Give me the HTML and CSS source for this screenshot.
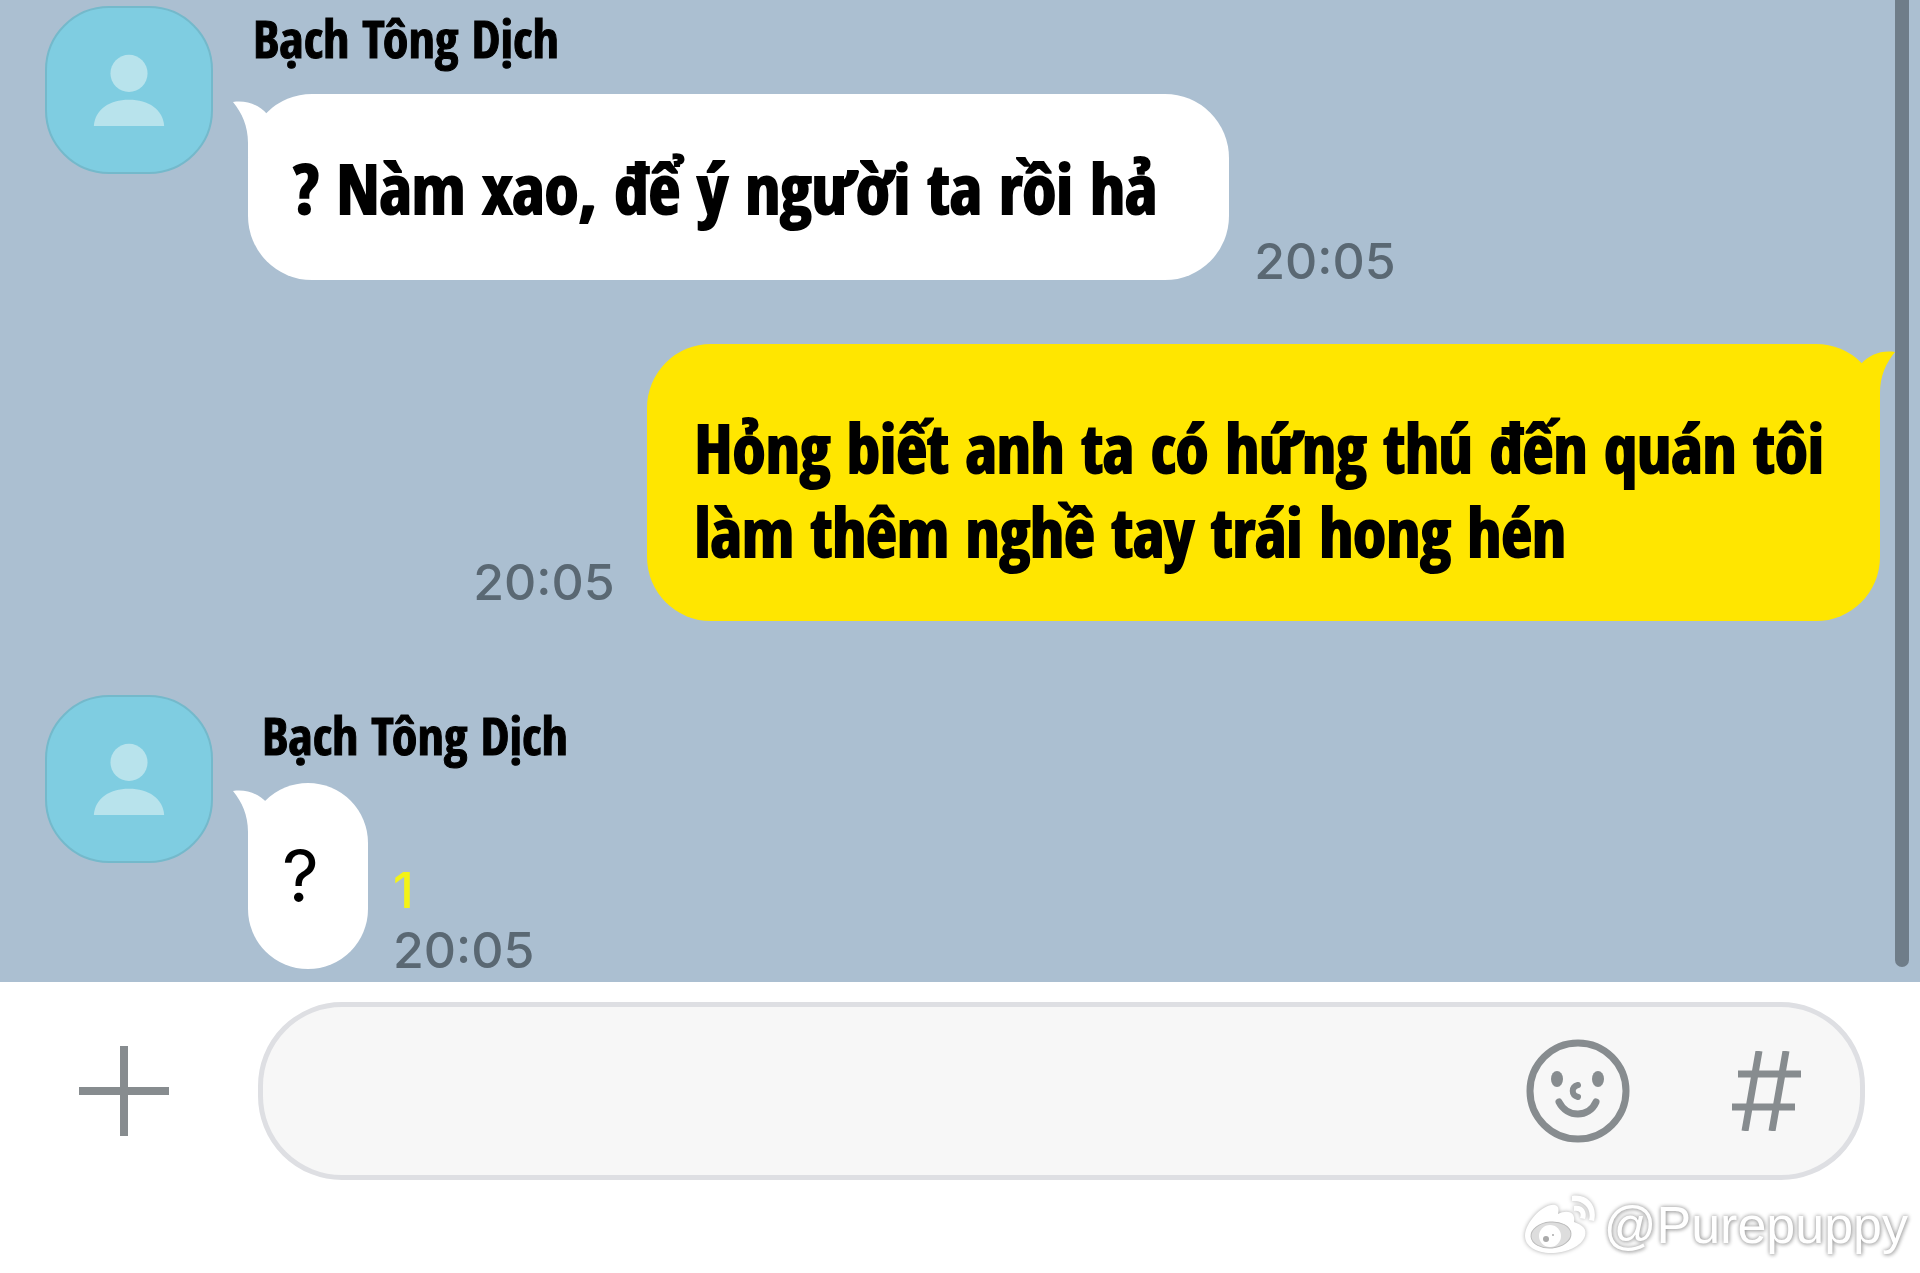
FILE: index.html
```
<!DOCTYPE html>
<html lang="vi">
<head>
<meta charset="utf-8">
<meta name="viewport" content="width=device-width, initial-scale=1">
<title>Bạch Tông Dịch</title>
<link rel="stylesheet" href="styles.css">
</head>
<body>
<svg class="sprite" aria-hidden="true">
  <symbol id="person" viewBox="0 0 168 168">
    <circle cx="84" cy="67" r="19"/>
    <path d="M48 121C49 104 64 94 84 94S119 104 120 121Z"/>
  </symbol>
  <symbol id="tail" viewBox="0 0 48 56">
    <path d="M0 1C14 -1 26 4 34 13L48 28V56H15V42C15 25 9 12 0 1Z"/>
  </symbol>
</svg>
<main class="chat">
  <article class="message">
    <svg class="avatar" role="img" aria-label="Avatar"><use href="#person"/></svg>
    <div class="content">
      <h2 class="name">Bạch Tông Dịch</h2>
      <div class="line">
        <div class="bubble bubble-in"><svg class="tail" aria-hidden="true"><use href="#tail"/></svg><p>? Nàm xao, để ý người ta rồi hả</p></div>
        <div class="meta"><time>20:05</time></div>
      </div>
    </div>
  </article>

  <article class="message message-own">
    <div class="line">
      <div class="meta"><time>20:05</time></div>
      <div class="bubble bubble-out"><svg class="tail" aria-hidden="true"><use href="#tail"/></svg><p>Hỏng biết anh ta có hứng thú đến quán tôi<br>làm thêm nghề tay trái hong hén</p></div>
    </div>
  </article>

  <article class="message">
    <svg class="avatar" role="img" aria-label="Avatar"><use href="#person"/></svg>
    <div class="content">
      <h2 class="name name-inset">Bạch Tông Dịch</h2>
      <div class="line">
        <div class="bubble bubble-in bubble-short"><svg class="tail" aria-hidden="true"><use href="#tail"/></svg><p>?</p></div>
        <div class="meta"><span class="unread">1</span><time>20:05</time></div>
      </div>
    </div>
  </article>
  <div class="scrollbar"></div>
</main>

<form class="composer">
  <button class="icon-button" type="button" aria-label="Add">
    <svg width="90" height="90" viewBox="0 0 90 90"><path d="M45 0V90M0 45H90" fill="none" stroke="currentColor" stroke-width="8"/></svg>
  </button>
  <div class="field">
    <input type="text" aria-label="Message">
    <button class="icon-button" type="button" aria-label="Emoji">
      <svg width="104" height="104" viewBox="0 0 104 104" fill="none" stroke="currentColor" stroke-width="7" stroke-linecap="round">
        <circle cx="52" cy="52" r="48"/>
        <ellipse cx="31" cy="40" rx="6" ry="8" fill="currentColor" stroke="none"/>
        <ellipse cx="72" cy="40" rx="6" ry="8" fill="currentColor" stroke="none"/>
        <path d="M52 46C45 48 45 56 52 58" stroke-width="6"/>
        <path d="M33 63C41 79 63 79 70 63"/>
      </svg>
    </button>
    <button class="icon-button" type="button" aria-label="Hashtag">
      <svg width="70" height="80" viewBox="0 0 70 80" fill="none" stroke="currentColor" stroke-width="7">
        <path d="M28 0L14 80M55 0L41 80M7 23H70M1 56H64"/>
      </svg>
    </button>
  </div>
</form>

<footer class="credit">
  <svg width="76" height="66" viewBox="0 0 76 66" aria-hidden="true">
    <path d="M3 44C3 30 22 11 33 13C37 14 37 18 36 22C44 18 54 19 52 30C61 33 65 37 63 44C60 54 45 61 29 61C14 61 3 54 3 44Z"/>
    <path d="M50 4C66 1 76 15 72 29L67 28C70 17 62 8 50 9Z"/>
    <path d="M52 14C60 12 66 19 63 27L58 26C60 21 57 18 52 19Z"/>
    <ellipse cx="29" cy="43" rx="20" ry="13" transform="rotate(-5 29 43)" class="eye"/>
    <circle cx="28" cy="44" r="11"/>
    <circle cx="24" cy="47" r="3" class="pupil"/><circle cx="31" cy="43" r="1" class="pupil"/>
  </svg>
  <span>@Purepuppy</span>
</footer>
</body>
</html>
```
FILE: styles.css
```
* { box-sizing: border-box; }

body {
  margin: 0;
  min-height: 100vh;
  background: #fff;
  color: #000;
  font-family: Inter, "Liberation Sans", sans-serif;
}

h2, p { margin: 0; }

.sprite { position: absolute; width: 0; height: 0; }

/* Conversation */
.chat {
  position: relative;
  padding: 6px 40px 13px 45px;
  overflow: hidden;
  background: #abbfd1;
}

.message { display: flex; gap: 35px; }

.message-own {
  justify-content: flex-end;
  margin: 64px 0 74px;
}

.avatar {
  flex: none;
  width: 168px;
  height: 168px;
  border: 2px solid #74b9cb;
  border-radius: 64px;
  background: #7fcde1;
  fill: #b8e3ec;
}

.name {
  height: 88px;
  padding: 0 5px;
  font: 700 52px/64px "Open Sans Condensed", "Roboto Condensed", sans-serif;
  -webkit-text-stroke: 1px #000;
}

.name-inset { padding: 8px 14px 0; }

.line {
  display: flex;
  align-items: flex-end;
  gap: 25px;
}

.message-own .line { gap: 32px; }

.bubble {
  position: relative;
  border-radius: 64px;
  font: 700 69px/84px "Open Sans Condensed", "Roboto Condensed", sans-serif;
  -webkit-text-stroke: 2px #000;
  white-space: nowrap;
}

.bubble-in {
  padding: 51px 72px 51px 45px;
  background: #fff;
  color: #000;
}

.bubble-out {
  padding: 61px 56px 48px 48px;
  background: #ffe600;
  font-size: 67px;
}

.bubble-short {
  width: 120px;
  padding: 51px 34px;
  font: 400 72px/84px Inter, sans-serif;
  -webkit-text-stroke: 0;
}

.tail {
  position: absolute;
  top: 7px;
  left: -15px;
  width: 48px;
  height: 56px;
  fill: #fff;
}

.bubble-out .tail {
  right: -15px;
  left: auto;
  fill: #ffe600;
  transform: scaleX(-1);
}

.meta {
  display: flex;
  flex-direction: column;
  margin-bottom: -11px;
  color: #5a6873;
  font-size: 50px;
  font-weight: 450;
  line-height: 60px;
}

.message-own .meta { margin-bottom: 9px; }

.unread { color: #f4f316; }

.scrollbar {
  position: absolute;
  top: 0;
  right: 11px;
  bottom: 15px;
  width: 14px;
  border-radius: 0 0 7px 7px;
  background: #6f7d89;
}

/* Message composer */
.composer {
  display: flex;
  align-items: center;
  gap: 89px;
  padding: 20px 55px 0 79px;
}

.icon-button {
  display: flex;
  flex: none;
  padding: 0;
  border: 0;
  background: none;
  color: #878c8f;
}

.field {
  display: flex;
  flex: 1;
  align-items: center;
  gap: 101px;
  min-width: 0;
  height: 178px;
  padding: 0 59px;
  border: 5px solid #dedfe3;
  border-radius: 84px;
  background: #f7f7f7;
}

.field input {
  flex: 1;
  min-width: 0;
  height: 84px;
  border: 0;
  outline: 0;
  background: none;
  font: 400 50px/60px Inter, sans-serif;
}

.credit {
  display: flex;
  align-items: center;
  justify-content: flex-end;
  gap: 6px;
  padding: 12px 12px 0;
  color: #fff;
  font: 400 52px/66px "Liberation Sans", sans-serif;
  text-shadow: 0 0 4px #999, 1px 1px 4px #bbb;
}

.credit svg {
  fill: #fff;
  filter: drop-shadow(0 0 2px #aaa);
}

.credit .eye { fill: #ddd; stroke: #bbb; }
.credit .pupil { fill: #aaa; }
```
